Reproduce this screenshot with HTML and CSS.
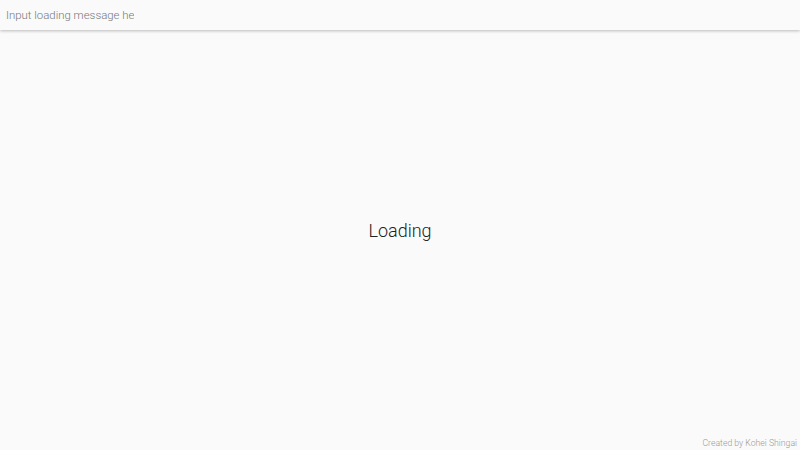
FILE: index.html
```html
<!DOCTYPE html>
<html>
<head>
<meta charset="utf-8">
<link rel="stylesheet" href="styles.css">
</head>
<body>
<div class="app">
  <header class="bar">
    <input class="msg" type="text" placeholder="Input loading message here">
  </header>
  <main class="stage">
    <div class="loading">Loading</div>
  </main>
  <footer class="credit">Created by Kohei Shingai</footer>
</div>
</body>
</html>
```
FILE: styles.css
```css
html, body {
  margin: 0;
  padding: 0;
  height: 100%;
  background: #fafafa;
  font-family: Roboto, "Noto Sans", sans-serif;
  font-weight: 300;
}
.app {
  display: flex;
  flex-direction: column;
  height: 100%;
}
.bar {
  height: 30px;
  background: #fafafa;
  box-shadow: 0 1px 3px rgba(0,0,0,0.25);
  display: flex;
  align-items: center;
  position: relative;
  z-index: 1;
}
.msg {
  border: none;
  outline: none;
  background: transparent;
  font-family: Roboto, sans-serif;
  font-weight: 300;
  font-size: 11.4px;
  padding: 0 0 0 6px;
  width: 128px;
  color: #333;
  height: 30px;
}
.msg::placeholder {
  color: #777;
}
.stage {
  flex: 1;
  display: flex;
  align-items: center;
  justify-content: center;
}
.loading {
  font-size: 18px;
  font-weight: 300;
  color: #222;
  margin-top: -7px;
}
.credit {
  text-align: right;
  font-size: 8.7px;
  color: #999;
  padding: 0 3px 2px 0;
}
```
